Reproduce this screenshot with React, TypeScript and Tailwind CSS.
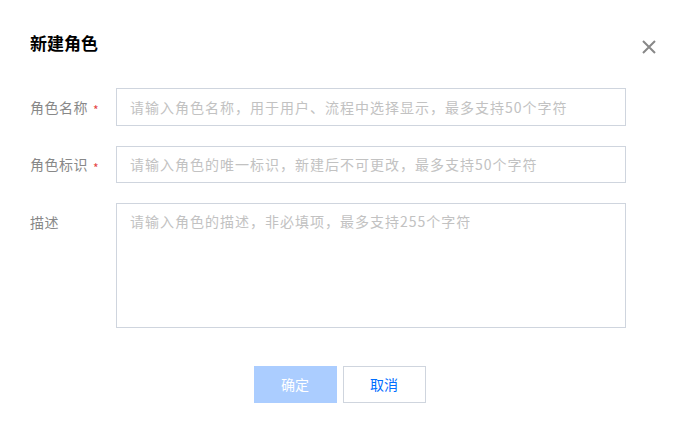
import React from "react";

export default function App() {
  const font = { fontFamily: '"Noto Sans CJK SC", "Noto Sans", sans-serif' };
  return (
    <div className="w-[683px] h-[434px] bg-white relative" style={font}>
      <div className="flex items-start justify-between pl-[30px] pr-[26px] pt-[31px]">
        <h1 className="text-[17px] leading-[24px] font-bold text-[#000000]">新建角色</h1>
        <button className="mt-[8px] w-[16px] h-[16px] flex items-center justify-center text-[#888888]">
          <svg width="16" height="16" viewBox="0 0 16 16" fill="none" stroke="currentColor" strokeWidth="2">
            <path d="M2 2L14 14M14 2L2 14" />
          </svg>
        </button>
      </div>
      <div className="pl-[30px] pt-[33px] flex flex-col gap-[20px]">
        <div className="flex items-center">
          <div className="w-[86px] text-[14px] tracking-[0.5px] text-[#888888] flex items-center">
            角色名称<span className="text-[#e54545] ml-[5px] text-[12px] translate-y-[3px]">*</span>
          </div>
          <div className="w-[510px] h-[38px] border border-[#cfd5de] flex items-center px-[13px] text-[14px] tracking-[1px] text-[#c2c2c2]">
            请输入角色名称，用于用户、流程中选择显示，最多支持50个字符
          </div>
        </div>
        <div className="flex items-center">
          <div className="w-[86px] text-[14px] tracking-[0.5px] text-[#888888] flex items-center">
            角色标识<span className="text-[#e54545] ml-[5px] text-[12px] translate-y-[3px]">*</span>
          </div>
          <div className="w-[510px] h-[37px] border border-[#cfd5de] flex items-center px-[13px] text-[14px] tracking-[1px] text-[#c2c2c2]">
            请输入角色的唯一标识，新建后不可更改，最多支持50个字符
          </div>
        </div>
        <div className="flex items-start">
          <div className="w-[86px] text-[14px] tracking-[0.5px] text-[#888888] pt-[9px] leading-[20px]">描述</div>
          <div className="w-[510px] h-[125px] border border-[#cfd5de] px-[13px] pt-[7px] text-[14px] tracking-[1px] leading-[20px] text-[#c2c2c2]">
            请输入角色的描述，非必填项，最多支持255个字符
          </div>
        </div>
      </div>
      <div className="flex justify-center gap-[6px] mt-[38px] pr-[4px]">
        <button className="w-[83px] h-[37px] bg-[#abcdff] text-white text-[14px]">确定</button>
        <button className="w-[83px] h-[37px] border border-[#cfd5de] bg-white text-[#006eff] text-[14px]">取消</button>
      </div>
    </div>
  );
}
